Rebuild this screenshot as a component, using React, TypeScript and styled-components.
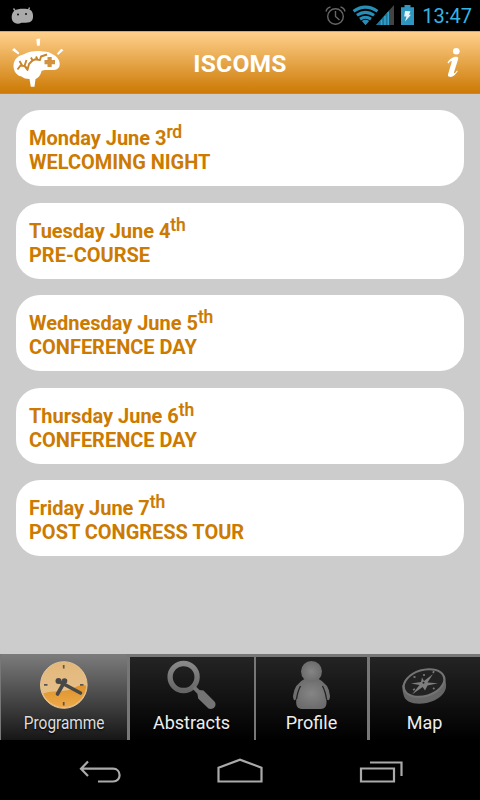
import React from "react";
import styled, { createGlobalStyle } from "styled-components";

const GlobalStyle = createGlobalStyle`
  * { box-sizing: border-box; }
  body { margin: 0; background: #000; font-family: Roboto, sans-serif; }
  svg { display: block; flex: none; }
`;

const Screen = styled.div`
  width: 480px;
  height: 800px;
  display: flex;
  flex-direction: column;
  background: #000;
  overflow: hidden;
`;

const StatusBar = styled.div`
  height: 31px;
  display: flex;
  align-items: flex-start;
  padding-left: 10px;
  padding-right: 8px;
`;

const StatusIcons = styled.div`
  margin-left: auto;
  display: flex;
`;

const Clock = styled.time`
  width: 52px;
  padding-top: 4px;
  font-size: 20px;
  line-height: 24px;
  color: #33b5e5;
  text-align: right;
  white-space: nowrap;
`;

const Header = styled.header`
  height: 63px;
  flex: none;
  display: grid;
  grid-template-columns: 80px 1fr 80px;
  align-items: center;
  background: linear-gradient(#ffd08c, #cc7a04);
  border-top: 1px solid #d8a868;
  border-bottom: 1px solid #b08c5c;
`;

const Title = styled.h1`
  margin: 0;
  padding-top: 2px;
  font-size: 24.6px;
  line-height: 28px;
  font-weight: 700;
  letter-spacing: 0.2px;
  color: #fff;
  text-align: center;
`;

const Content = styled.main`
  height: 560px;
  flex: none;
  padding: 16px 16px 0;
  background: #ccc;
  display: flex;
  flex-direction: column;
  gap: 16.5px;
`;

const Card = styled.article`
  height: 76px;
  padding: 16px 13px 0;
  background: #fff;
  border-radius: 24px;
  color: #cc7a00;
  font-size: 20px;
  line-height: 24px;
  font-weight: 700;
  letter-spacing: -0.02px;
  white-space: nowrap;
`;

const Line = styled.div`
  height: 24px;
`;

const Ordinal = styled.sup`
  font-size: 17.5px;
  font-weight: 500;
  letter-spacing: -0.2px;
  line-height: 0;
  vertical-align: 7px;
  -webkit-text-stroke: 0.2px #cc7a00;
`;

const TabBar = styled.nav`
  height: 86px;
  flex: none;
  display: grid;
  grid-template-columns: 126px 124px 111px 110px;
  column-gap: 2.5px;
  padding: 0 1px;
  background: #777;
`;

const Tab = styled.div<{ $active?: boolean }>`
  margin-top: ${(p) => (p.$active ? 0 : 3)}px;
  padding-top: ${(p) => (p.$active ? 3 : 0)}px;
  display: flex;
  flex-direction: column;
  align-items: center;
  background: ${(p) =>
    p.$active ? "linear-gradient(#7c7c7c, #161616)" : "linear-gradient(#242424, #000)"};
`;

const TabLabel = styled.span<{ $compact?: boolean }>`
  font-size: 18px;
  line-height: 22px;
  margin-top: 1px;
  transform: ${(p) => (p.$compact ? "scaleX(0.855)" : "none")};
  color: ${(p) => (p.$compact ? "#ddd" : "#eee")};
  text-shadow: 0 1px 2px #000;
  white-space: nowrap;
`;

const SystemNav = styled.footer`
  height: 60px;
  display: flex;
`;

function AndroidIcon() {
  return (
    <svg width="26" height="31" viewBox="10 0 26 31" fill="#aaa">
      <path d="M15 10.500 13.500 8.500M28.500 10l1-2.400" stroke="#aaa" strokeWidth="1.400" />
      <path d="M14.500 10.500c3-2 12-2.300 16-.5 2 1.500 2.800 4 2.500 7.500-.3 3.300-2.500 5-5.500 5-2 .3-4 0-6 .3-3 1.500-7 1-8.700-1.500-1.600-2.500-1.700-8 1.700-10.800z" />
      <circle cx="18" cy="14.500" r="1" fill="#111" />
      <circle cx="26" cy="14" r="1" fill="#111" />
    </svg>
  );
}

function AlarmIcon() {
  return (
    <svg width="26" height="31" viewBox="323 0 26 31" fill="none" stroke="#666" strokeWidth="1.400">
      <circle cx="335.500" cy="16.500" r="7.800" />
      <path d="M335.500 11V16.500l4 3.500M326 11.500c.5-2.500 2-4 4.500-4.500M345 11.500c-.5-2.500-2-4-4.500-4.500" />
    </svg>
  );
}

function WifiIcon() {
  return (
    <svg width="26" height="31" viewBox="349 0 26 31" fill="none" stroke="#278fb7" strokeWidth="3.100" overflow="visible">
      <path d="M353.500 11.300q12-8.200 24 0M356.900 15.300q8.600-5.800 17.200 0M360 19.100q5.500-3.700 11 0" />
      <path d="m361.800 21 3.700 4.200 3.700-4.200q-3.700-2.500-7.400 0z" fill="#278fb7" stroke="none" />
    </svg>
  );
}

function SignalIcon() {
  return (
    <svg width="22" height="31" viewBox="375 0 22 31">
      <path d="M376 25 394 5v20z" fill="#444" />
      <path d="M376 25 389 10.500V25z" fill="#1d7597" />
      <path d="M381.500 20V25M385 16V25M388.300 12V25" stroke="#33a4cf" strokeWidth="1.500" />
    </svg>
  );
}

function BatteryIcon() {
  return (
    <svg width="23" height="31" viewBox="397 0 23 31">
      <path d="M401 7.300h3.500V5h6v2.300h3.500V25h-13z" fill="#3095bf" />
      <path d="m405 11 5.500.2-1.500 3.600h2l-6 6.700 1.500-5h-2.300z" fill="#e3f4fa" />
    </svg>
  );
}

function BrainLogo() {
  return (
    <svg width="80" height="61" viewBox="0 32 80 61">
      <g fill="#fff">
        <path d="m36.300 39 3.900-.4-.5 7.200h-2.700zM12 50l2.200-2 5.200 5-1.100 1.500zM57 53.500l4.200-4.800 2.300 1.600-5.500 4.700z" />
        <path d="M13.500 66c0-7 5-10.500 11-12 4-2.500 12-3.500 18-2.500 5-.1 8 1 10 2.800 4.500 1.700 7.600 6.200 7.200 10.200-.3 4.500-3.700 5.700-8.200 5.500-4 .1-8-.5-10 1-.5 3.500-3 7-6 8l-1 7.800h-3.700l-1.300-7.800c-3.500 0-6-.8-8-2.500-5-1-8-5.500-8-10.500z" />
      </g>
      <path d="m17.500 69.500 3-4 4 .5 3 4 1.500-6 3-3 3-1.700 5 .8 1-3.600 6-2M19.500 61l3 5M26.500 60l-2 6 4 3M31 57.500l2 4M36 56.500l1.500 3" fill="none" stroke="#c9852b" strokeWidth="1.900" strokeLinejoin="round" />
      <path d="M47.500 57h4.200v3H55v4.300h-3.300v2.700h-4.200v-2.700h-3V60h3z" fill="#d2923e" />
    </svg>
  );
}

function InfoIcon() {
  return (
    <svg width="80" height="61" viewBox="400 32 80 61" fill="#fff">
      <circle cx="456.300" cy="51.300" r="3.300" />
      <path d="M447.500 62.500c2-3 5-5.700 8.800-5.700 1.800 0 2.300.7 1.800 2.500l-4 12.700c-.4 1.300.4 1.500 1.400.5l1.500-2.100.8.6c-2 3.200-4.500 6-7.400 6-2.600 0-2.700-1.400-2.100-3.400l3.300-11.300c.3-1.400-.4-1.500-1.300-.7l-2 1.800z" />
    </svg>
  );
}

function ProgrammeIcon() {
  return (
    <svg width="56" height="54" viewBox="36 657 56 54">
      <defs>
        <linearGradient id="dial" x2="0" y2="1"><stop stopColor="#e2b77b" /><stop offset="1" stopColor="#e8c48f" /></linearGradient>
        <linearGradient id="sand" x2="0" y2="1"><stop stopColor="#dd932a" /><stop offset="1" stopColor="#efa94a" /></linearGradient>
      </defs>
      <circle cx="63.800" cy="685" r="23.300" fill="url(#dial)" stroke="#e5c392" />
      <path d="M43.200 693.500q7-2.700 18-2.300 11-1.200 14-4 4-2.500 11-1.800A22.400 22.400 0 0 1 43.200 693.500z" fill="url(#sand)" />
      <path d="M63.700 665v3.500M63.700 702v3.500M44 684.800h3.500M80 684.800h3.500" stroke="#555" strokeWidth="1.700" />
      <path d="m59 681.500 21.500 11.500M65 681l-7.500 13" stroke="#484848" strokeWidth="3.600" strokeLinecap="round" />
      <circle cx="58.500" cy="681" r="3" fill="#484848" /><circle cx="64.500" cy="681" r="2.800" fill="#484848" />
    </svg>
  );
}

function AbstractsIcon() {
  return (
    <svg width="56" height="54" viewBox="164 657 56 54">
      <defs><linearGradient id="lens" x2="0" y2="1"><stop stopColor="#888" /><stop offset="1" stopColor="#666" /></linearGradient></defs>
      <circle cx="183.600" cy="677" r="13.500" fill="none" stroke="url(#lens)" strokeWidth="5.300" />
      <path d="m195 685.500 4.500 4.500 4 .4 11 11.200c3 4-1 9-6 7l-10.300-10.200-.8-4.700-4.900-4.900z" fill="#747474" />
    </svg>
  );
}

function ProfileIcon() {
  return (
    <svg width="56" height="54" viewBox="284 657 56 54">
      <defs><radialGradient id="person"><stop stopColor="#858585" /><stop offset="1" stopColor="#6c6c6c" /></radialGradient></defs>
      <path d="M306 678q-12 6-13 18 .3 5 2.200 4l1.400-2q-2 11 5.500 11h18.500q7.500 0 5.500-11l1.500 2q2.200 1 2.400-4-.5-12-13-18z" fill="url(#person)" />
      <circle cx="311.500" cy="671.500" r="10.500" fill="url(#person)" />
      <path d="M300.500 686q-2.800 5-4 13M322.500 686q2.800 5 4 13" fill="none" stroke="#222" strokeWidth="1.300" />
    </svg>
  );
}

function MapIcon() {
  return (
    <svg width="56" height="54" viewBox="397 657 56 54">
      <path d="M402.300 685q0 6 1.300 10c2 8 12 10 23 8 12-2.500 20-10 19.500-18l-1-8z" fill="#656565" />
      <ellipse cx="424" cy="683" rx="22" ry="14" transform="rotate(-17 424 683)" fill="#737373" />
      <ellipse cx="424" cy="683" rx="19.800" ry="11.900" transform="rotate(-17 424 683)" fill="#222" />
      <path d="m412 694.500 7.500-9.500-8.500-1.500 10-1.500 1-4.500 2 3.500 9-7-5.500 8.500 10.500.8-10.500 2.200-2.500 5-2.300-3.500z" fill="#7e7e7e" />
      <path d="m413.500 676.500 2 1M424 674v2M433 673l1-2M413 690l2-1M433 688l1.500 1" stroke="#777" strokeWidth="1.700" />
      <circle cx="423.500" cy="682.700" r="1" fill="#222" />
    </svg>
  );
}

function NavigationIcons() {
  return (
    <svg width="480" height="60" viewBox="0 740 480 60" fill="none" stroke="#aaa" strokeWidth="2.200">
      <path d="m88 761.500-7 7.200 7 7.200M81 768.700h32c8.500 0 9 12.800 0 12.800H98M218.500 781.500v-13.800l21.500-8 21.500 8v13.800zM361 768.500h33v13h-33zM370 762.500h31.500V776" />
    </svg>
  );
}

const days = [
  { date: "Monday June 3", suffix: "rd", event: "WELCOMING NIGHT" },
  { date: "Tuesday June 4", suffix: "th", event: "PRE-COURSE" },
  { date: "Wednesday June 5", suffix: "th", event: "CONFERENCE DAY" },
  { date: "Thursday June 6", suffix: "th", event: "CONFERENCE DAY" },
  { date: "Friday June 7", suffix: "th", event: "POST CONGRESS TOUR" },
];

export default function App() {
  return (
    <Screen>
      <GlobalStyle />
      <StatusBar>
        <AndroidIcon />
        <StatusIcons><AlarmIcon /><WifiIcon /><SignalIcon /><BatteryIcon /><Clock>13:47</Clock></StatusIcons>
      </StatusBar>
      <Header><BrainLogo /><Title>ISCOMS</Title><InfoIcon /></Header>
      <Content>
        {days.map((day) => (
          <Card key={day.date}>
            <Line>{day.date}<Ordinal>{day.suffix}</Ordinal></Line>
            <Line>{day.event}</Line>
          </Card>
        ))}
      </Content>
      <TabBar>
        <Tab $active><ProgrammeIcon /><TabLabel $compact>Programme</TabLabel></Tab>
        <Tab><AbstractsIcon /><TabLabel>Abstracts</TabLabel></Tab>
        <Tab><ProfileIcon /><TabLabel>Profile</TabLabel></Tab>
        <Tab><MapIcon /><TabLabel>Map</TabLabel></Tab>
      </TabBar>
      <SystemNav><NavigationIcons /></SystemNav>
    </Screen>
  );
}
